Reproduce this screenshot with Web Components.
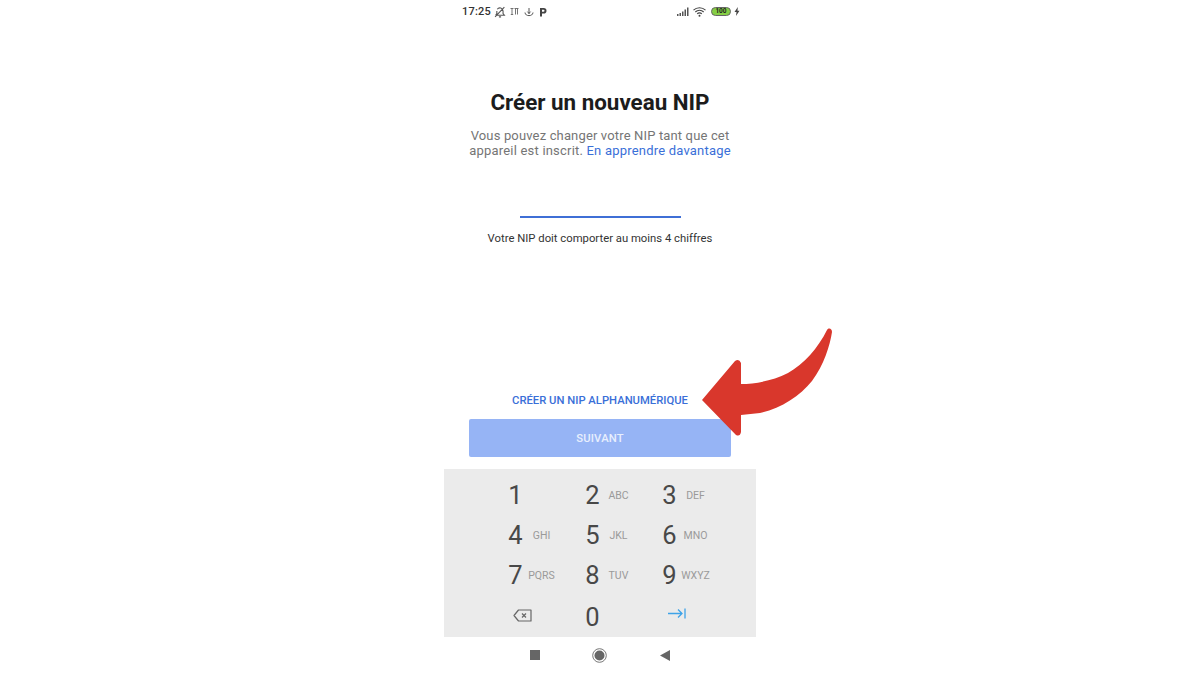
<!DOCTYPE html>
<html lang="fr">
<head>
<meta charset="utf-8">
<title>Créer un nouveau NIP</title>
<style>
  html, body { margin: 0; height: 100%; background: #fff; }
  body { font-family: Roboto, "Liberation Sans", sans-serif; overflow: hidden; }
</style>
</head>
<body>
<phone-screen>
  <status-bar slot="status"></status-bar>
  <pin-form slot="form"></pin-form>
  <num-pad slot="pad"></num-pad>
  <nav-bar slot="nav"></nav-bar>
</phone-screen>
<red-arrow></red-arrow>

<script>
class PhoneScreen extends HTMLElement {
  connectedCallback() {
    this.attachShadow({ mode: 'open' });
    this.shadowRoot.innerHTML = `
      <style>
        :host { display: block; height: 675px; }
        .screen {
          width: 312px;
          height: 675px;
          margin: 0 auto;
          display: flex;
          flex-direction: column;
        }
      </style>
      <div class="screen">
        <slot name="status"></slot>
        <slot name="form"></slot>
        <slot name="pad"></slot>
        <slot name="nav"></slot>
      </div>
    `;
  }
}

class StatusBar extends HTMLElement {
  connectedCallback() {
    this.attachShadow({ mode: 'open' });
    this.shadowRoot.innerHTML = `
      <style>
        :host { display: flex; height: 23px; flex: none; align-items: center; justify-content: space-between; padding: 0 16px 0 18px; box-sizing: border-box; color: #444; }
        .side { display: flex; align-items: center; }
        .time { font-size: 11px; font-weight: 500; letter-spacing: .2px; color: #333; margin-right: 3px; }
        svg { display: block; }
        .left svg { margin-right: 5px; }
        .right svg { margin-left: 4px; }
        .batt { margin-left: 5px; width: 20px; height: 9px; box-sizing: border-box; border: 1px solid #666; border-radius: 4.500px; background: #86cf45; font-size: 6.500px; font-weight: 700; line-height: 7px; text-align: center; color: #222; }
      </style>
      <div class="side left">
        <span class="time">17:25</span>
        <svg width="12" height="12" viewBox="0 0 11 11" fill="none" stroke="#555" stroke-width="1" style="margin-right:4px"><path d="M2 8.500h7.500L8.300 7V4.500A2.900 2.900 0 0 0 3 3M2.600 4.500V7L1.500 8.500M4.500 10h2M1 10 9.500 1"/></svg>
        <svg width="9" height="9" viewBox="0 0 9 9" fill="none" stroke="#666" stroke-width=".9"><path d="M.5 1.500h3M2 1.500v6M.8 7.500h2.400M4.500 1.500h4M5.500 1.500v6M7.500 1.500v6"/></svg>
        <svg width="10" height="10" viewBox="0 0 10 10" fill="none" stroke="#555" stroke-width="1"><path d="M5 1v6M3.400 4.600 5 6.400l1.600-1.800M1 5.500C1.200 7.800 3 8.600 5 8.600s3.800-.8 4-3.100"/></svg>
        <svg width="8" height="10" viewBox="0 0 8 10"><path fill="#444" fill-rule="evenodd" d="M1 1h3.700a2.600 2.600 0 0 1 0 5.600H3V9.500H1zM3 2.800v2h1.500a1 1 0 0 0 0-2z"/></svg>
      </div>
      <div class="side right">
        <svg width="13" height="9" viewBox="0 0 13 9" fill="#555"><rect x="0" y="7" width="1.500" height="2"/><rect x="2.500" y="6" width="1.500" height="3"/><rect x="5" y="4.500" width="1.500" height="4.500"/><rect x="7.500" y="2.500" width="1.500" height="6.500"/><rect x="10" y=".5" width="1.500" height="8.500"/></svg>
        <svg width="13" height="10" viewBox="0 0 13 10" fill="none" stroke="#444" stroke-width="1.100" style="margin-left:3px"><path d="M.5 3.200A8.500 8.500 0 0 1 12.500 3.200M2.300 5a6 6 0 0 1 8.400 0M4.200 6.900a3.100 3.100 0 0 1 4.600 0"/><circle cx="6.500" cy="8.700" r="1" fill="#444" stroke="none"/></svg>
        <div class="batt">100</div>
        <svg width="6" height="9" viewBox="0 0 6 9" fill="#444" style="margin-left:3px"><path d="M3.800 0 .5 5h2L2 9l3.500-5.300h-2z"/></svg>
      </div>
    `;
  }
}

class PinForm extends HTMLElement {
  connectedCallback() {
    this.attachShadow({ mode: 'open' });
    this.shadowRoot.innerHTML = `
      <style>
        :host { display: flex; flex-direction: column; align-items: center; flex: 1; text-align: center; }
        h1 { margin: 65px 0 0; font-size: 22.400px; line-height: 28px; font-weight: 700; color: #1c1c1c; }
        .intro { margin-top: 12px; font-size: 13px; line-height: 15px; color: #757575; letter-spacing: .15px; }
        .intro .second { letter-spacing: .2px; }
        a { color: #3a6fd8; text-decoration: none; }
        .field { margin-top: 58px; width: 161px; height: 2px; background: #3f6fd6; }
        .hint { margin-top: 14px; font-size: 11.300px; line-height: 14px; color: #333; }
        .alt { margin-top: 148px; font-size: 11.250px; line-height: 14px; font-weight: 500; color: #3a6fd8; }
        .next {
          margin-top: 11px;
          width: 262px;
          height: 38px;
          border-radius: 2px;
          background: #96b4f5;
          color: #e8effd;
          font-size: 11.250px;
          font-weight: 500;
          letter-spacing: .2px;
          display: flex;
          align-items: center;
          justify-content: center;
        }
      </style>
      <h1>Créer un nouveau NIP</h1>
      <div class="intro">
        <div>Vous pouvez changer votre NIP tant que cet</div>
        <div class="second">appareil est inscrit. <a href="#">En apprendre davantage</a></div>
      </div>
      <div class="field"></div>
      <div class="hint">Votre NIP doit comporter au moins 4 chiffres</div>
      <div class="alt">CRÉER UN NIP ALPHANUMÉRIQUE</div>
      <div class="next">SUIVANT</div>
    `;
  }
}

class PadKey extends HTMLElement {
  connectedCallback() {
    const digit = this.getAttribute('digit') || '';
    const letters = this.getAttribute('letters') || '';
    this.attachShadow({ mode: 'open' });
    this.shadowRoot.innerHTML = `
      <style>
        :host { display: block; height: 40px; align-self: end; }
        .inner { display: grid; grid-template-columns: 26.500px 24px 36px; align-items: center; height: 40px; }
        .d { grid-column: 2; text-align: center; font-size: 25.500px; color: #484848; }
        .l { grid-column: 3; text-align: center; margin-left: -8px; font-size: 10.500px; color: #9a9a9a; }
      </style>
      <div class="inner">
        <span class="d">${digit}</span>
        <span class="l">${letters}</span>
      </div>
    `;
  }
}

class NumPad extends HTMLElement {
  connectedCallback() {
    this.attachShadow({ mode: 'open' });
    this.shadowRoot.innerHTML = `
      <style>
        :host { display: block; flex: none; height: 168px; background: #ebebeb; padding: 6px 0 0 33px; box-sizing: border-box; }
        .grid { display: grid; grid-template-columns: repeat(3, 77px); grid-template-rows: 40px 40px 40px 42px; }
        .icon { display: flex; align-items: center; height: 40px; }
        .back { padding-left: 36px; }
        .tab { padding-left: 37px; padding-bottom: 4px; box-sizing: border-box; }
      </style>
      <div class="grid">
        <pad-key digit="1"></pad-key>
        <pad-key digit="2" letters="ABC"></pad-key>
        <pad-key digit="3" letters="DEF"></pad-key>
        <pad-key digit="4" letters="GHI"></pad-key>
        <pad-key digit="5" letters="JKL"></pad-key>
        <pad-key digit="6" letters="MNO"></pad-key>
        <pad-key digit="7" letters="PQRS"></pad-key>
        <pad-key digit="8" letters="TUV"></pad-key>
        <pad-key digit="9" letters="WXYZ"></pad-key>
        <div class="icon back">
          <svg width="19" height="13" viewBox="0 0 19 13" fill="none" stroke="#666" stroke-width="1.200"><path d="M5.500 1H18v11H5.500L1 6.500z" stroke-linejoin="round"/><path d="M9 4.500l4 4M13 4.500l-4 4"/></svg>
        </div>
        <pad-key digit="0"></pad-key>
        <div class="icon tab">
          <svg width="18" height="11" viewBox="0 0 18 11" fill="none" stroke="#3ea3e8" stroke-width="1.300"><path d="M0 5.500h14M10 1.500l4 4-4 4M17 .5v10"/></svg>
        </div>
      </div>
    `;
  }
}

class NavBar extends HTMLElement {
  connectedCallback() {
    this.attachShadow({ mode: 'open' });
    this.shadowRoot.innerHTML = `
      <style>
        :host { display: block; flex: none; height: 38px; padding-right: 1px; }
        .row { display: grid; grid-template-columns: repeat(3, 65px); justify-content: center; align-items: center; height: 36px; }
        svg { display: block; margin: 0 auto; }
      </style>
      <div class="row">
        <svg width="10" height="10"><rect width="10" height="10" fill="#666"/></svg>
        <svg width="15" height="15" viewBox="0 0 15 15"><circle cx="7.500" cy="7.500" r="6.800" fill="none" stroke="#666" stroke-width=".9"/><circle cx="7.500" cy="7.500" r="5" fill="#666"/></svg>
        <svg width="10" height="11" viewBox="0 0 10 11"><path d="M10 0v11L0 5.500z" fill="#666"/></svg>
      </div>
    `;
  }
}

class RedArrow extends HTMLElement {
  connectedCallback() {
    this.attachShadow({ mode: 'open' });
    this.shadowRoot.innerHTML = `
      <style>
        :host { position: absolute; left: 700px; top: 325px; display: block; width: 135px; height: 115px; pointer-events: none; }
        svg { display: block; }
      </style>
      <svg width="135" height="115" viewBox="700 325 135 115">
        <path fill="#d9372c" d="M702 400 735 361Q739 358 741 363L741 384C755 384 772 381 788 373 804 364 818 348 827 330 829 327 832 329 832 332 830 345 824 365 812 381 800 396 780 409 760 413L741 415 741 432Q740 437 736 435Z"/>
      </svg>
    `;
  }
}

customElements.define('phone-screen', PhoneScreen);
customElements.define('status-bar', StatusBar);
customElements.define('pin-form', PinForm);
customElements.define('pad-key', PadKey);
customElements.define('num-pad', NumPad);
customElements.define('nav-bar', NavBar);
customElements.define('red-arrow', RedArrow);
</script>
</body>
</html>
